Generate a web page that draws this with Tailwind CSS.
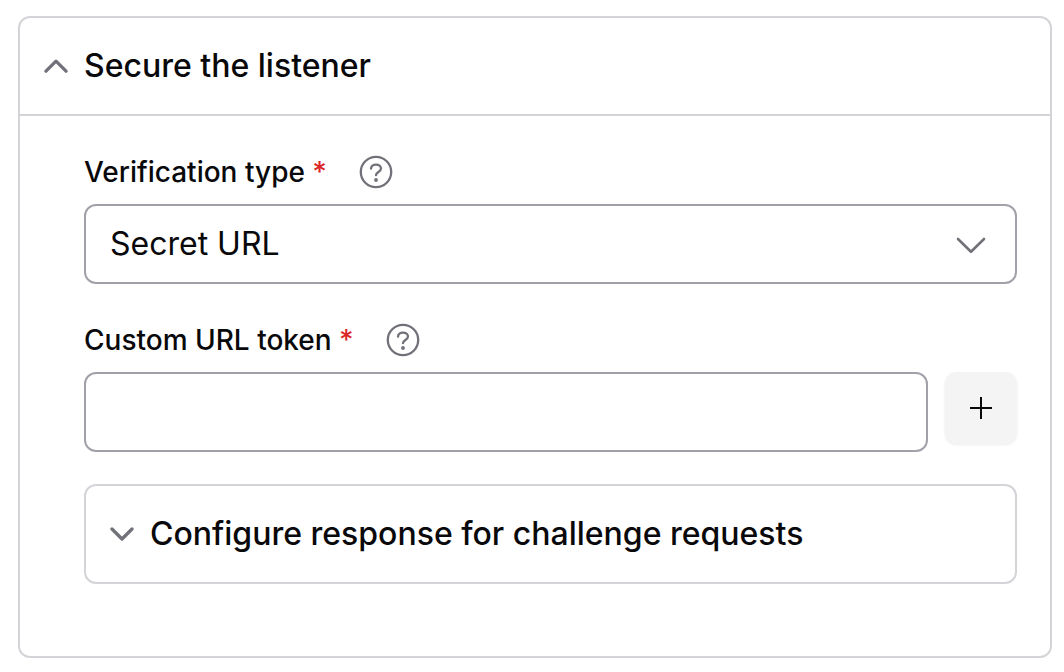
<!DOCTYPE html>
<html lang="en">
<head>
    <meta charset="UTF-8">
    <meta name="viewport" content="width=device-width, initial-scale=1.0">
    <title>Listener settings</title>
    <script src="https://cdn.jsdelivr.net/npm/@tailwindcss/browser@4"></script>
</head>
<body class="bg-white font-['Inter','Liberation_Sans',sans-serif] text-[#09090b]">

    <!-- Panel -->
    <section class="mt-4 mr-3 ml-[18px] rounded-xl border-2 border-[#d4d4d8]">
        <h2 class="border-b-2 border-[#d4d4d8]">
            <button type="button" aria-expanded="true" aria-controls="listenerBody" class="flex w-full items-center gap-4 px-6 py-7 text-left text-[32px] leading-10 font-medium">
                <svg class="h-6 w-6 shrink-0 text-[#71717a]" viewBox="0 0 24 24" fill="none" stroke="currentColor" stroke-width="3.3" stroke-linecap="round" stroke-linejoin="round" aria-hidden="true">
                    <path d="M2 17.2 12 7.2l10 10" />
                </svg>
                Secure the listener
            </button>
        </h2>

        <div id="listenerBody" class="pt-9 pr-[33px] pb-[72px] pl-16">
            <!-- Verification type -->
            <div class="flex h-10 items-center gap-8">
                <label for="verificationType" class="text-[28px] leading-10 font-medium">Verification type <span class="text-[#dc2626]">*</span></label>
                <button type="button" aria-label="Help for verification type" class="text-[#71717a]">
                    <svg class="h-[34px] w-[34px]" viewBox="0 0 34 34" fill="none" stroke="currentColor" stroke-width="2.3" stroke-linecap="round" stroke-linejoin="round" aria-hidden="true">
                        <circle cx="17" cy="17" r="15.2" />
                        <path d="M12 13.7c0-2.4 2.2-4.1 5-4.1s5 1.7 5 4c0 3.4-5 3.4-5 6.6" />
                        <circle cx="17" cy="25" r="1.9" fill="currentColor" stroke="none" />
                    </svg>
                </button>
            </div>
            <div class="mt-3 grid">
                <select id="verificationType" class="col-start-1 row-start-1 h-20 w-full appearance-none rounded-xl border-2 border-[#a1a1aa] bg-white pr-20 pl-6 text-[32px]">
                    <option>Secret URL</option>
                </select>
                <svg class="pointer-events-none col-start-1 row-start-1 mr-[30px] h-8 w-8 self-center justify-self-end text-[#71717a]" viewBox="0 0 32 32" fill="none" stroke="currentColor" stroke-width="2.6" stroke-linecap="round" stroke-linejoin="round" aria-hidden="true">
                    <path d="M3 11 16 23.8l13-12.8" />
                </svg>
            </div>

            <!-- Custom URL token -->
            <div class="mt-9 flex h-10 items-center gap-8">
                <label for="urlToken" class="text-[28px] leading-10 font-medium">Custom URL token <span class="text-[#dc2626]">*</span></label>
                <button type="button" aria-label="Help for custom URL token" class="text-[#71717a]">
                    <svg class="h-[34px] w-[34px]" viewBox="0 0 34 34" fill="none" stroke="currentColor" stroke-width="2.3" stroke-linecap="round" stroke-linejoin="round" aria-hidden="true">
                        <circle cx="17" cy="17" r="15.2" />
                        <path d="M12 13.7c0-2.4 2.2-4.1 5-4.1s5 1.7 5 4c0 3.4-5 3.4-5 6.6" />
                        <circle cx="17" cy="25" r="1.9" fill="currentColor" stroke="none" />
                    </svg>
                </button>
            </div>
            <div class="mt-3 flex items-start gap-[17px]">
                <input id="urlToken" type="text" class="h-20 min-w-0 flex-1 rounded-xl border-2 border-[#a1a1aa] bg-white px-6 text-[32px]">
                <button type="button" aria-label="Add token" class="flex h-[72px] w-[72px] items-center justify-center rounded-xl bg-[#f4f4f4] shadow-[0_1px_3px_rgba(0,0,0,0.08)]">
                    <svg class="h-6 w-6" viewBox="0 0 24 24" fill="none" stroke="currentColor" stroke-width="2" aria-hidden="true">
                        <path d="M12 1v22M1 12h22" />
                    </svg>
                </button>
            </div>

            <!-- Challenge response -->
            <section class="mt-8 rounded-xl border-2 border-[#d4d4d8]">
                <h3>
                    <button type="button" aria-expanded="false" class="flex w-full items-center gap-4 px-6 py-7 text-left text-[32px] leading-10 font-medium">
                        <svg class="h-6 w-6 shrink-0 text-[#71717a]" viewBox="0 0 24 24" fill="none" stroke="currentColor" stroke-width="3.3" stroke-linecap="round" stroke-linejoin="round" aria-hidden="true">
                            <path d="M2 7 12 17l10-10" />
                        </svg>
                        Configure response for challenge requests
                    </button>
                </h3>
            </section>
        </div>
    </section>

</body>
</html>
